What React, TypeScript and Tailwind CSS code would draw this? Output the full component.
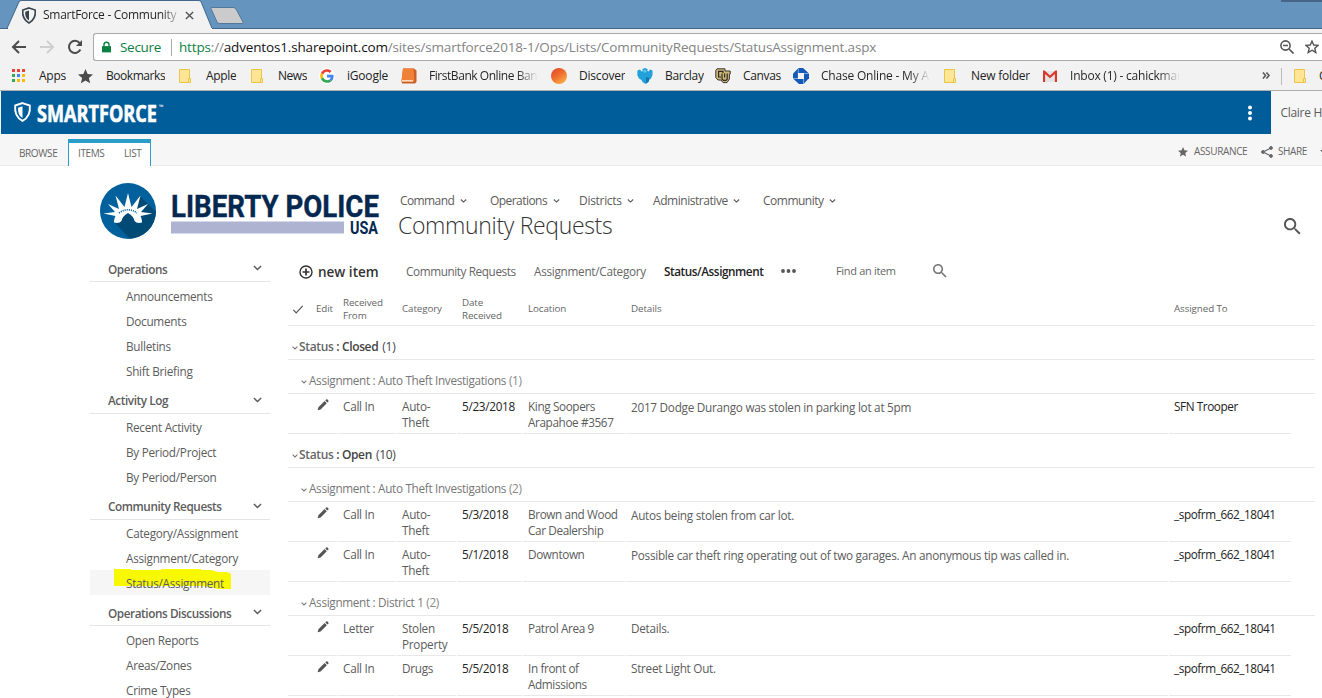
import React from "react";

type IconProps = { className?: string };

const Shield = ({ className }: IconProps) => (
  <svg viewBox="0 0 16 18" className={className} fill="none">
    <path d="M8 1 L14.6 3.2 C15.2 9.5 13.2 14.2 8 17 C2.8 14.2 .8 9.5 1.4 3.2 Z" stroke="currentColor" strokeWidth="1.7" />
    <path d="M8 3.8 L4 5.1 C3.7 9.4 4.9 12.4 8 14.4 Z" fill="currentColor" />
  </svg>
);

const Chevron = ({ className }: IconProps) => (
  <svg viewBox="0 0 10 6" className={className} fill="none" stroke="currentColor" strokeWidth="1.7">
    <path d="M1 .8 L5 4.6 L9 .8" />
  </svg>
);

const Search = ({ className }: IconProps) => (
  <svg viewBox="3 3 18 18" className={className} fill="currentColor">
    <path d="M15.5 14h-.79l-.28-.27C15.41 12.59 16 11.11 16 9.5 16 5.91 13.09 3 9.5 3S3 5.91 3 9.5 5.91 16 9.5 16c1.61 0 3.09-.59 4.23-1.57l.27.28v.79l5 4.99L20.49 19l-4.99-5zm-6 0C7.01 14 5 11.99 5 9.5S7.01 5 9.5 5 14 7.01 14 9.5 11.99 14 9.5 14z" />
  </svg>
);

const Pencil = () => (
  <svg viewBox="0 0 12 12" className="ml-[6px] mt-[5px] h-[12px] w-[12px] text-[#555]" fill="currentColor">
    <path d="M.6 11.2 L1.4 8.3 L7.6 2.1 L9.8 4.3 L3.6 10.5 Z M8.3 1.5 L9.2 .6 C9.6 .2 10.1 .2 10.5 .6 L11.3 1.4 C11.7 1.8 11.7 2.3 11.3 2.7 L10.4 3.6 Z" />
  </svg>
);

const Star = ({ className }: IconProps) => (
  <svg viewBox="0 0 24 24" className={className} fill="currentColor">
    <path d="M12 18.3 L19.4 22.8 L17.4 14.4 L24 8.7 L15.4 8 L12 0 L8.6 8 L0 8.7 L6.6 14.4 L4.6 22.8 Z" />
  </svg>
);

const Folder = () => (
  <svg viewBox="0 0 16 16" className="h-4 w-4">
    <path d="M1.5 1.5 H11.5 V14.5 H1.5 Z" fill="#ffe694" stroke="#ebc549" />
    <path d="M10.5 10.5 H12.5 V14.5 H10.5 Z" fill="#ffe694" stroke="#ebc549" />
  </svg>
);

const AppsIcon = () => (
  <svg viewBox="0 0 16 16" className="h-4 w-4">
    <path fill="#ea4335" d="M1 1h3v3H1zM6 1h3v3H6zM11 1h3v3h-3z" />
    <path fill="#34a853" d="M1 6h3v3H1zM1 11h3v3H1z" />
    <path fill="#4285f4" d="M6 6h3v3H6z" />
    <path fill="#fbbc05" d="M11 6h3v3h-3zM6 11h3v3H6zM11 11h3v3h-3z" />
  </svg>
);

const GoogleIcon = () => (
  <svg viewBox="-4 -4 56 56" className="h-4 w-4">
    <circle cx="24" cy="24" r="28" fill="#fff" />
    <path fill="#EA4335" d="M24 9.5c3.54 0 6.71 1.22 9.21 3.6l6.85-6.85C35.9 2.38 30.47 0 24 0 14.62 0 6.51 5.38 2.56 13.22l7.98 6.19C12.43 13.72 17.74 9.5 24 9.5z" />
    <path fill="#4285F4" d="M46.98 24.55c0-1.57-.15-3.09-.38-4.55H24v9.02h12.94c-.58 2.96-2.26 5.48-4.78 7.18l7.73 6c4.51-4.18 7.09-10.36 7.09-17.65z" />
    <path fill="#FBBC05" d="M10.53 28.59c-.48-1.45-.76-2.99-.76-4.59s.27-3.14.76-4.59l-7.98-6.19C.92 16.46 0 20.12 0 24c0 3.88.92 7.54 2.56 10.78l7.97-6.19z" />
    <path fill="#34A853" d="M24 48c6.48 0 11.93-2.13 15.89-5.81l-7.73-6c-2.15 1.45-4.92 2.3-8.16 2.3-6.26 0-11.57-4.22-13.47-9.91l-7.98 6.19C6.51 42.62 14.62 48 24 48z" />
  </svg>
);

const FirstBankIcon = () => (
  <svg viewBox="0 0 16 16" className="h-4 w-4">
    <path d="M2 .5 H13 L15.5 2.500 V14 L14 15.500 H1 L.5 13 Z" fill="#c9602a" />
    <path d="M2 .5 H12.500 L13.500 13.500 H.5 Z" fill="#ef8236" />
    <path d="M1 12 H12 V13.600 H1 Z" fill="#fbd9b8" />
  </svg>
);

const DiscoverIcon = () => (
  <svg viewBox="0 0 16 16" className="h-4 w-4">
    <defs>
      <linearGradient id="disc" x1="0" y1="0" x2=".7" y2="1">
        <stop offset="0" stopColor="#e0452a" />
        <stop offset=".5" stopColor="#ee6a2e" />
        <stop offset="1" stopColor="#fbab42" />
      </linearGradient>
    </defs>
    <circle cx="8" cy="8" r="8" fill="url(#disc)" />
  </svg>
);

const BarclayIcon = () => (
  <svg viewBox="0 0 16 16" className="h-4 w-4">
    <path d="M.5 2.500 L3 1.500 L4.500 3.500 L5.500 3 L5.500 1 L8 0 L10.500 1 L10.500 3 L11.500 3.500 L13 1.500 L15.500 2.500 V7 L14 10.500 L12.500 11.500 L11.500 14 L8.500 16 L5.500 14 L4.500 12 L2 10.500 L.3 7 Z" fill="#21a0da" />
    <path d="M5.500 3 L8 1.500 L10 3 L8 5 Z" fill="#5cc6ec" />
    <path d="M9 9 L9 15.500 L11.500 13.500 L12.500 10 Z" fill="#1477ac" />
  </svg>
);

const CanvasIcon = () => (
  <svg viewBox="0 0 16 16" className="h-4 w-4" fill="none">
    <path d="M2 .8 H10 V3 H15.200 V6 H14.400 V11 L12 14.600 H8 L6 12 H3 L.8 9.600 V2.400 Z" fill="#cdb87a" stroke="#3a372c" strokeWidth="1" />
    <path d="M8 5 V3.400 H3.600 V9 H6 M7 5.600 V11 L8.500 12.400 H11 L12.200 11 V5.600 M9.600 5.600 V9.600" stroke="#2c2a22" strokeWidth="1.200" />
  </svg>
);

const ChaseIcon = () => (
  <svg viewBox="0 0 16 16" className="h-4 w-4">
    <path d="M5.400 0 H10 L15.500 5 H5.400 Z" fill="#1459b8" />
    <path d="M16 5.600 V10.200 L11 15.500 V5.600 Z" fill="#1459b8" />
    <path d="M10.500 16 H6 L.5 11 H10.500 Z" fill="#1459b8" />
    <path d="M0 10.400 V5.800 L4.900 .5 V10.400 Z" fill="#1459b8" />
    <path d="M5 5 H11 V11 H5 Z" fill="#f2f2f2" />
  </svg>
);

const GmailIcon = () => (
  <svg viewBox="0 0 16 16" className="h-4 w-4">
    <path d="M1 3 H15 V14 H1 Z" fill="#e4e4e4" />
    <path d="M1 14 V2.600 H2.600 L8 7.400 L13.400 2.600 H15 V14 H12.900 V6 L8 10.200 L3.100 6 V14 Z" fill="#d8372c" />
  </svg>
);

const bookmarks = [
  { w: "w-[67px]", t: "max-w-[108px]", track: "tracking-[-0.25px]", label: "Apps", icon: <AppsIcon /> },
  { w: "w-[100px]", t: "max-w-[108px]", track: "tracking-[-0.45px]", label: "Bookmarks", icon: <Star className="h-[15px] w-[15px] text-[#4a4a4a]" /> },
  { w: "w-[72px]", t: "max-w-[108px]", track: "tracking-[-0.35px]", label: "Apple", icon: <Folder /> },
  { w: "w-[69px]", t: "max-w-[108px]", track: "tracking-[-0.45px]", label: "News", icon: <Folder /> },
  { w: "w-[82px]", t: "max-w-[108px]", track: "tracking-[-0.2px]", label: "iGoogle", icon: <GoogleIcon /> },
  { w: "w-[150px]", t: "w-[109px]", track: "tracking-[-0.45px]", label: "FirstBank Online Bank", fade: true, icon: <FirstBankIcon /> },
  { w: "w-[86px]", t: "max-w-[108px]", track: "tracking-[-0.2px]", label: "Discover", icon: <DiscoverIcon /> },
  { w: "w-[78px]", t: "max-w-[108px]", track: "tracking-[-0.3px]", label: "Barclay", icon: <BarclayIcon /> },
  { w: "w-[78px]", t: "max-w-[108px]", track: "tracking-[-0.35px]", label: "Canvas", icon: <CanvasIcon /> },
  { w: "w-[150px]", t: "w-[109px]", track: "tracking-[-0.2px]", label: "Chase Online - My A", fade: true, icon: <ChaseIcon /> },
  { w: "w-[99px]", t: "max-w-[108px]", track: "tracking-[-0.25px]", label: "New folder", icon: <Folder /> },
  { w: "w-[220px]", t: "w-[110px]", track: "tracking-[-0.22px]", label: "Inbox (1) - cahickman", fade: true, icon: <GmailIcon /> },
];

const Browser = () => (
  <header className="text-[12px] text-[#222]">
    <div className="relative flex h-[29px] bg-[#6595be]">
      <svg viewBox="0 0 250 29" className="absolute left-0 top-0 h-[29px] w-[250px]">
        <path d="M0 28.5 H7 L19 1.5 Q20 .5 22 .5 H198 Q200 .5 201 1.5 L212 28.5 H250" fill="none" stroke="#46678a" />
        <path d="M7.3 29 L19.5 2 Q20 1 22 1 H198 Q200 1 200.6 2 L211.7 29 Z" fill="#f2f2f2" />
        <path d="M211 8.5 Q210.5 7.5 212 7.5 H233 Q235 7.5 236 9 L243 22 Q244 23.5 242 23.5 H220 Q217.500 23.5 217 22 Z" fill="#cbcbcb" stroke="#55779b" />
      </svg>
      <div className="relative flex w-full items-center border-b border-[#46678a] pl-[21px] pt-[2px]">
        <Shield className="h-[17px] w-[16px] text-[#39434d]" />
        <span className="ml-[6px] w-[134px] overflow-hidden whitespace-nowrap bg-gradient-to-r from-[#222] from-88% to-[#bbb] bg-clip-text tracking-[-0.28px] text-transparent">SmartForce - Community</span>
        <svg viewBox="0 0 10 10" className="ml-[8px] h-[9px] w-[9px]" stroke="#555" strokeWidth="1.6"><path d="M1 1 L9 9 M9 1 L1 9" /></svg>
      </div>
      <div className="absolute left-[8px] top-[28px] h-px w-[204px] bg-[#f2f2f2]" />
      <div className="absolute right-0 top-0 h-[2px] w-[41px] bg-[#476788]" />
    </div>
    <div className="flex h-[32px] items-center bg-[#f2f2f2] pt-[4px]">
      <svg viewBox="0 0 16 14" className="ml-[11px] h-[14px] w-[16px]" fill="none" stroke="#4c4c4c" strokeWidth="2"><path d="M15 7 H2 M8 1 L2 7 L8 13" /></svg>
      <svg viewBox="0 0 16 14" className="ml-[12px] h-[14px] w-[16px]" fill="none" stroke="#cfcfcf" strokeWidth="2"><path d="M1 7 H14 M8 1 L14 7 L8 13" /></svg>
      <svg viewBox="0 0 16 16" className="ml-[12px] h-[16px] w-[16px]" fill="none" stroke="#4c4c4c" strokeWidth="2"><path d="M13.4 10.500 A6 6 0 1 1 12.600 4" /><path d="M15 1 V7 H9 Z" fill="#4c4c4c" stroke="none" /></svg>
      <div className="ml-[10px] flex h-[28px] flex-1 items-center rounded-l-[3px] border border-r-0 border-[#aaa] bg-white text-[14px]">
        <svg viewBox="0 0 10 12" className="ml-[8px] h-[12px] w-[9px]"><path d="M0 5 H10 V12 H0 Z" fill="#0b8043" /><path d="M2.200 5.500 V3.500 A2.800 2.800 0 0 1 7.800 3.500 V5.500" fill="none" stroke="#0b8043" strokeWidth="1.500" /></svg>
        <span className="ml-[9px] w-[41px] whitespace-nowrap text-[13.5px] tracking-[-0.3px] text-[#0b8043]">Secure</span>
        <span className="ml-[10px] h-[17px] w-px bg-[#aaa]" />
        <span className="ml-[7px] whitespace-nowrap text-[13.5px] tracking-[-0.16px] text-[#848484]"><span className="text-[#0b8043]">https</span>://<span className="text-[#111]">adventos1.sharepoint.com</span>/sites/smartforce2018-1/Ops/Lists/CommunityRequests/StatusAssignment.aspx</span>
        <svg viewBox="0 0 14 14" className="ml-auto mr-[11px] h-[14px] w-[14px] shrink-0" fill="none" stroke="#555" strokeWidth="1.600"><circle cx="5.500" cy="5.500" r="4.600" /><path d="M9 9 L13.500 13.500 M3 5.500 H8" /></svg>
        <svg viewBox="0 0 24 24" className="mr-[3px] h-[14px] w-[14px] shrink-0" fill="none" stroke="#555" strokeWidth="2.400"><path d="M12 17.500 L18.500 21.500 L16.800 14 L22.500 9.200 L15 8.600 L12 2 L9 8.600 L1.500 9.200 L7.200 14 L5.500 21.500 Z" /></svg>
      </div>
    </div>
    <div className="flex h-[29px] items-center overflow-hidden bg-[#f2f2f2] pl-[11px] pt-[1px]">
      {bookmarks.map((b) => (
        <div key={b.label} className={`flex shrink-0 items-center ${b.w}`}>
          <span className="flex w-[28px] shrink-0">{b.icon}</span>
          <span className={`overflow-hidden whitespace-nowrap ${b.track} ${b.t} ${b.fade ? "bg-gradient-to-r from-[#222] from-80% to-[#f2f2f2] bg-clip-text text-transparent" : ""}`}>{b.label}</span>
        </div>
      ))}
      <svg viewBox="0 0 9 8" className="mb-[1px] h-[7px] w-[8px] shrink-0" fill="none" stroke="#555" strokeWidth="1.700"><path d="M1 .5 L4 4 L1 7.500 M5 .5 L8 4 L5 7.500" /></svg>
      <span className="ml-[11px] h-[17px] w-px shrink-0 bg-[#bbb]" />
      <span className="ml-[11px] shrink-0"><Folder /></span>
      <span className="ml-[10px]">C</span>
    </div>
    <div className="h-px bg-[#b0b0b0]" />
  </header>
);

const Crest = () => (
  <svg viewBox="0 0 56 56" className="h-[56px] w-[56px] shrink-0">
    <defs><clipPath id="crest"><circle cx="28" cy="28" r="28" /></clipPath></defs>
    <g clipPath="url(#crest)">
      <path d="M0 0 H56 V56 H0 Z" fill="#02609c" />
      <path d="M40 13 L60 33 V60 H34 L14 39 L28 30 Z" fill="#024a76" />
    </g>
    <path d="M14 39.500 C14 37 14.500 35 15.500 33 L3.500 30.500 L15 29 L8 21 L19 26 L15.500 12.500 L24.500 24 L28 10 L31.500 24 L40.500 12.500 L37 26 L48 21 L41 29 L52.500 30.500 L40.500 33 C41.500 35 42 37 42 39.500 C39 40.500 36 40 34.500 38 C34 35 32 32 28 30 C24 32 22 35 21.500 38 C20 40 17 40.500 14 39.500 Z" fill="#fff" />
    <path d="M19 30 Q28 23.500 37 30" fill="none" stroke="#02609c" strokeWidth="1.600" strokeDasharray="1.100 1" />
  </svg>
);

const sideGroups = [
  { title: "Operations", items: ["Announcements", "Documents", "Bulletins", "Shift Briefing"], head: "h-[30px] pt-[6px]", pad: "pt-px" },
  { title: "Activity Log", items: ["Recent Activity", "By Period/Project", "By Period/Person"], head: "h-[31px] pt-[6px]", pad: "" },
  { title: "Community Requests", items: ["Category/Assignment", "Assignment/Category", "Status/Assignment"], head: "h-[31px] pt-[6px]", pad: "" },
  { title: "Operations Discussions", items: ["Open Reports", "Areas/Zones", "Crime Types"], head: "h-[31px] pt-[7px]", pad: "pt-px" },
];

const Sidebar = () => (
  <nav className="ml-[90px] w-[180px] shrink-0 text-[11.75px] tracking-[-0.27px] text-[#5c5c5c]">
    {sideGroups.map((g) => (
      <section key={g.title}>
        <div className={`flex items-center justify-between border-b border-[#e4e4e4] pl-[18px] pr-[8px] font-semibold ${g.head}`}>
          <span className="whitespace-nowrap tracking-[-0.42px]">{g.title}</span>
          <Chevron className="mb-[3px] h-[6px] w-[9px]" />
        </div>
        <div className={g.pad}>
          {g.items.map((it) => {
            const active = it === "Status/Assignment";
            return (
              <div key={it} className={`relative flex h-[25px] items-center whitespace-nowrap pl-[36px] pt-[2px] ${active ? "bg-[#f6f6f6]" : ""}`}>
                {active && (
                  <svg viewBox="0 0 118 22" className="absolute left-[24px] top-[-1px] h-[22px] w-[118px]">
                    <path d="M0 0 H17 V1 H47 V0 H87 V1 H97 L104 3 H113 L117 5 V20 L103 20 L98 18 L88 17 H0 Z" fill="#f8f800" />
                  </svg>
                )}
                <span className="relative">{it}</span>
              </div>
            );
          })}
        </div>
      </section>
    ))}
  </nav>
);

const cols = "grid grid-cols-[23px_27px_59px_60px_66px_103px_543px_122px]";

const GroupRow = ({ name, value, count }: { name: string; value: string; count: number }) => (
  <div className="flex h-[34px] items-center border-b border-[#e8e8e8] pl-[4px] pt-[9px] text-[#444]">
    <Chevron className="mr-px mt-[2px] h-[4px] w-[6px] text-[#777]" />
    <span className="font-semibold tracking-[-0.35px]"><span className="text-[#666]">{name}</span> : {value}</span>
    <span className="ml-[4px] tracking-[-0.3px]">({count})</span>
  </div>
);

const SubRow = ({ value, count }: { value: string; count: number }) => (
  <div className="flex h-[34px] items-center border-b border-[#e8e8e8] pl-[13px] pt-[9px] text-[#777]">
    <Chevron className="mr-[2px] mt-[2px] h-[4px] w-[6px]" />
    <span className="text-[11.75px] tracking-[-0.32px]">Assignment : {value} <span className="text-[#888]">({count})</span></span>
  </div>
);

type Item = { from: string; cat: string[]; date: string; loc: string[]; details: string; who: string; up?: boolean };

const DataRow = ({ r }: { r: Item }) => (
  <div className={`${cols} h-[40px] text-[11.75px] leading-[16px] tracking-[-0.27px] [&>div]:mr-px [&>div]:border-b [&>div]:border-[#e8e8e8] [&>div]:pl-[4px] [&>div]:pt-[4px]`}>
    <div className="!mr-0" />
    <div className="!pl-0 !pt-0"><Pencil /></div>
    <div className="!pl-[5px]">{r.from}</div>
    <div className="!pl-[5px]">{r.cat.map((c) => <p key={c}>{c}</p>)}</div>
    <div className="!pl-[5px] tracking-[-0.3px] text-[#222]">{r.date}</div>
    <div className="!pl-[5px] whitespace-nowrap tracking-[-0.38px]">{r.loc.map((c) => <p key={c}>{c}</p>)}</div>
    <div className={`!pl-[5px] ${r.up ? "" : "!pt-[5px]"}`}>{r.details}</div>
    <div className="!mr-0 !pl-[5px] tracking-[-0.42px] text-[#222]">{r.who}</div>
  </div>
);

const views = [
  { label: "Community Requests", cls: "w-[128px] tracking-[-0.4px]" },
  { label: "Assignment/Category", cls: "w-[130px] tracking-[-0.28px]" },
  { label: "Status/Assignment", cls: "w-[117px] font-semibold text-[#222] tracking-[-0.44px]" },
];

const List = () => (
  <main className="ml-[18px] w-[1027px] shrink-0 text-[12px] text-[#5c5c5c]">
    <div className="flex h-[40px] items-center pl-[11px] text-[#666]">
      <svg viewBox="0 0 14 14" className="h-[14px] w-[14px]" fill="none" stroke="#333" strokeWidth="1.400"><circle cx="7" cy="7" r="6" /><path d="M7 3.500 V10.500 M3.500 7 H10.500" strokeWidth="1.700" /></svg>
      <span className="ml-[5px] w-[88px] whitespace-nowrap text-[13.5px] font-semibold text-[#333]">new item</span>
      {views.map((v) => <span key={v.label} className={`whitespace-nowrap text-[11.75px] ${v.cls}`}>{v.label}</span>)}
      <svg viewBox="0 0 15 4" className="mt-[-2px] h-[4px] w-[15px]" fill="#555"><circle cx="2" cy="2" r="1.900" /><circle cx="7.500" cy="2" r="1.900" /><circle cx="13" cy="2" r="1.900" /></svg>
      <span className="ml-[40px] mt-[-2px] w-[97px] text-[11px] tracking-[-0.32px]">Find an item</span>
      <Search className="mb-[2px] h-[14px] w-[14px] text-[#777]" />
    </div>
    <div className={`${cols} h-[34px] items-center border-b border-[#e8e8e8] text-[9.8px] leading-[13px] tracking-[-0.1px] text-[#666] [&>div]:pl-[5px]`}>
      <svg viewBox="0 0 12 10" className="ml-[4px] mt-[2px] h-[9px] w-[12px]" fill="none" stroke="#555" strokeWidth="1.300"><path d="M.8 5.500 L4 8.800 L11.200 1" /></svg>
      <div>Edit</div>
      <div className="pt-px">Received<br />From</div>
      <div>Category</div>
      <div className="pt-px">Date<br />Received</div>
      <div>Location</div>
      <div>Details</div>
      <div>Assigned To</div>
    </div>
    <GroupRow name="Status" value="Closed" count={1} />
    <SubRow value="Auto Theft Investigations" count={1} />
    <DataRow r={{ from: "Call In", cat: ["Auto-", "Theft"], date: "5/23/2018", loc: ["King Soopers", "Arapahoe #3567"], details: "2017 Dodge Durango was stolen in parking lot at 5pm", who: "SFN Trooper" }} />
    <GroupRow name="Status" value="Open" count={10} />
    <SubRow value="Auto Theft Investigations" count={2} />
    <DataRow r={{ from: "Call In", cat: ["Auto-", "Theft"], date: "5/3/2018", loc: ["Brown and Wood", "Car Dealership"], details: "Autos being stolen from car lot.", who: "_spofrm_662_18041" }} />
    <DataRow r={{ from: "Call In", cat: ["Auto-", "Theft"], date: "5/1/2018", loc: ["Downtown"], details: "Possible car theft ring operating out of two garages. An anonymous tip was called in.", who: "_spofrm_662_18041" }} />
    <SubRow value="District 1" count={2} />
    <DataRow r={{ from: "Letter", cat: ["Stolen", "Property"], date: "5/5/2018", loc: ["Patrol Area 9"], details: "Details.", who: "_spofrm_662_18041", up: true }} />
    <DataRow r={{ from: "Call In", cat: ["Drugs"], date: "5/5/2018", loc: ["In front of", "Admissions"], details: "Street Light Out.", who: "_spofrm_662_18041", up: true }} />
  </main>
);

const topNav = [
  { label: "Command", w: "w-[90px]", gap: "w-[60px] tracking-[-0.6px]" },
  { label: "Operations", w: "w-[89px]", gap: "w-[63px] tracking-[-0.55px]" },
  { label: "Districts", w: "w-[74px]", gap: "w-[48px] tracking-[-0.3px]" },
  { label: "Administrative", w: "w-[110px]", gap: "w-[80px] tracking-[-0.45px]" },
  { label: "Community", w: "w-[80px]", gap: "w-[66px] tracking-[-0.5px]" },
];

export default function App() {
  return (
    <div className="flex h-[698px] w-[1322px] flex-col overflow-hidden bg-white font-['Open_Sans','Noto_Sans',sans-serif]">
      <Browser />
      <div className="flex h-[43px] shrink-0 bg-[#f6f6f6] pl-px">
        <div className="flex w-[1270px] items-center bg-[#005d9a] pl-[12px]">
          <Shield className="mb-[1px] h-[20px] w-[19px] text-white" />
          <svg viewBox="0 0 130 22" className="ml-[4px] h-[22px] w-[130px]" fill="#fff">
            <text x="1" y="19.500" fontSize="22.500" fontWeight="700" textLength="120" lengthAdjust="spacingAndGlyphs" stroke="#fff" strokeWidth=".6">SMARTFORCE</text>
            <text x="123" y="7" fontSize="6" fontWeight="700">™</text>
          </svg>
          <svg viewBox="0 0 4 16" className="ml-auto mr-[19px] h-[16px] w-[4px]" fill="#fff"><circle cx="2" cy="2.500" r="2" /><circle cx="2" cy="8" r="2" /><circle cx="2" cy="13.500" r="2" /></svg>
        </div>
        <span className="ml-[10px] whitespace-nowrap pt-[13px] text-[12px] tracking-[-0.3px] text-[#5c5c5c]">Claire H</span>
      </div>
      <div className="flex h-[32px] shrink-0 border-b border-[#ebebeb] bg-[#f6f6f6] pl-px text-[10px] tracking-[-0.4px] text-[#666]">
        <span className="w-[67px] pl-[18px] pt-[12px]">BROWSE</span>
        <div className="mt-[5px] flex h-[27px] w-[83px] border-x border-t-4 border-[#2a9dc8] bg-white pt-[3px]">
          <span className="w-[55px] pl-[9px]">ITEMS</span>
          <span>LIST</span>
        </div>
        <Star className="ml-auto mt-[13px] h-[10px] w-[10px]" />
        <span className="ml-[6px] w-[67px] pt-[10px] tracking-[-0.35px]">ASSURANCE</span>
        <svg viewBox="0 0 12 12" className="mt-[12px] h-[12px] w-[12px]" fill="currentColor" stroke="currentColor"><path d="M10 2 L2 6 L10 10" fill="none" strokeWidth="1.200" /><circle cx="10" cy="2" r="1.400" /><circle cx="2" cy="6" r="1.400" /><circle cx="10" cy="10" r="1.400" /></svg>
        <span className="ml-[5px] w-[42px] pt-[10px]">SHARE</span>
        <Star className="mr-[-7px] mt-[13px] h-[9px] w-[9px] shrink-0" />
      </div>
      <div className="flex h-[86px] shrink-0 pl-[100px] pt-[17px]">
        <Crest />
        <svg viewBox="0 0 210 46" className="ml-[15px] mt-[8px] h-[46px] w-[210px] shrink-0 font-['Roboto',sans-serif]">
          <text x="0" y="26" fontSize="32" fontWeight="700" fill="#04284f" stroke="#04284f" strokeWidth=".4" textLength="208" lengthAdjust="spacingAndGlyphs">LIBERTY POLICE</text>
          <path d="M0 30.500 H173 V42.500 H0 Z" fill="#adb3d1" />
          <text x="179" y="43" fontSize="17.500" fontWeight="700" fill="#04284f" textLength="28" lengthAdjust="spacingAndGlyphs">USA</text>
        </svg>
        <div className="ml-[17px] mt-[10px] flex-1">
          <div className="flex h-[16px] items-center pl-[2px] text-[12px] leading-[16px] text-[#5c5c5c]">
            {topNav.map((n) => (
              <span key={n.label} className={`flex items-center ${n.w}`}>
                <span className={`whitespace-nowrap ${n.gap}`}>{n.label}</span>
                <Chevron className="h-[4px] w-[7px]" />
              </span>
            ))}
          </div>
          <h1 className="whitespace-nowrap text-[23px] font-light leading-[32px] tracking-[-0.33px] text-[#333]">Community Requests</h1>
        </div>
        <Search className="mr-[21px] mt-[35px] h-[17px] w-[17px] text-[#555]" />
      </div>
      <div className="flex">
        <Sidebar />
        <List />
      </div>
    </div>
  );
}
